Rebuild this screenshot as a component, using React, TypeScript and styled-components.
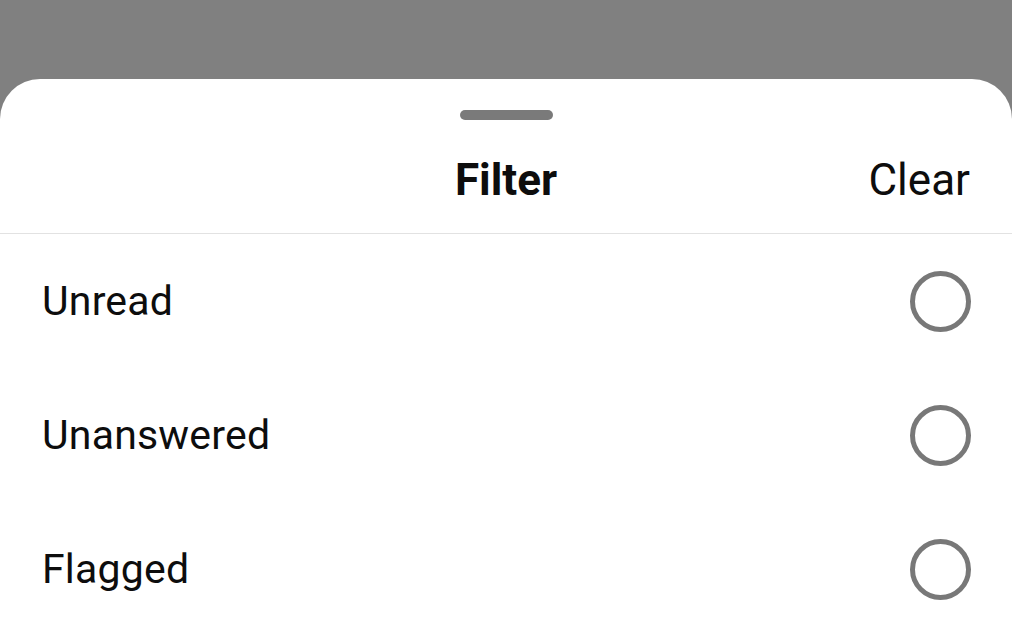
import React from "react";
import styled, { createGlobalStyle } from "styled-components";

const GlobalStyle = createGlobalStyle`
  html, body {
    margin: 0;
    padding: 0;
    background: #808080;
    font-family: Roboto, "Noto Sans", Arial, sans-serif;
  }
  #root {
    height: 628px;
    overflow: hidden;
  }
`;

const Backdrop = styled.div`
  height: 628px;
  background: #808080;
  padding-top: 79px;
  box-sizing: border-box;
`;

const Sheet = styled.div`
  height: 100%;
  background: #ffffff;
  border-radius: 40px 40px 0 0;
  color: #0d0d0d;
`;

const Header = styled.div`
  height: 155px;
  border-bottom: 1px solid #e2e2e2;
  box-sizing: border-box;
  display: flex;
  flex-direction: column;
  align-items: center;
  padding-top: 31px;
`;

const Handle = styled.div`
  width: 93px;
  height: 10px;
  border-radius: 5px;
  background: #7a7a7a;
`;

const TitleRow = styled.div`
  width: 100%;
  display: grid;
  grid-template-columns: 1fr auto 1fr;
  align-items: center;
  margin-top: 34px;
  padding: 0 42px;
  box-sizing: border-box;
`;

const Title = styled.div`
  grid-column: 2;
  font-size: 44px;
  font-weight: 700;
`;

const ClearButton = styled.button`
  justify-self: end;
  border: none;
  background: none;
  padding: 0;
  font-family: inherit;
  font-size: 44px;
  color: #0d0d0d;
`;

const Row = styled.div`
  height: 134px;
  display: flex;
  align-items: center;
  justify-content: space-between;
  padding: 0 41px 0 42px;
`;

const Label = styled.span`
  font-size: 41px;
  letter-spacing: 0.2px;
`;

const Radio = styled.span<{ $checked?: boolean }>`
  width: 51px;
  height: 51px;
  border-radius: 50%;
  border: 5px solid #787878;
  background: ${(p) => (p.$checked ? "#787878" : "transparent")};
`;

const options = ["Unread", "Unanswered", "Flagged"];

const App = () => {
  return (
    <>
      <GlobalStyle />
      <Backdrop>
        <Sheet>
          <Header>
            <Handle />
            <TitleRow>
              <Title>Filter</Title>
              <ClearButton>Clear</ClearButton>
            </TitleRow>
          </Header>
          {options.map((o) => (
            <Row key={o}>
              <Label>{o}</Label>
              <Radio />
            </Row>
          ))}
        </Sheet>
      </Backdrop>
    </>
  );
};

export default App;
